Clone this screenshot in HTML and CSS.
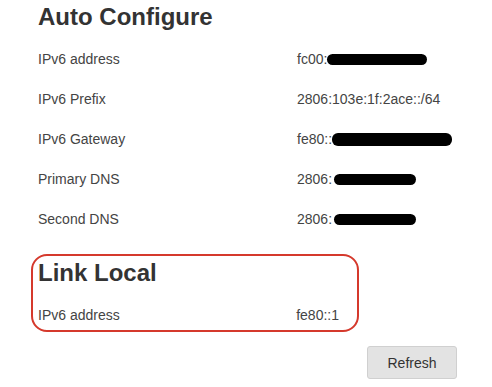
FILE: index.html
```html
<!DOCTYPE html>
<html lang="en">
<head>
    <meta charset="UTF-8">
    <meta name="viewport" content="width=device-width, initial-scale=1.0">
    <title>IPv6 Status</title>
    <link rel="stylesheet" href="styles.css">
</head>
<body>
    <div id="page">
        <h2 class="section-title">Auto Configure</h2>
        <div class="info-table">
            <div class="info-row">
                <span class="label">IPv6 address</span>
                <span class="value">fc00:<span class="redact" style="width: 100px"></span></span>
            </div>
            <div class="info-row">
                <span class="label">IPv6 Prefix</span>
                <span class="value">2806:103e:1f:2ace::/64</span>
            </div>
            <div class="info-row">
                <span class="label">IPv6 Gateway</span>
                <span class="value">fe80::<span class="redact tall" style="width: 120px"></span></span>
            </div>
            <div class="info-row">
                <span class="label">Primary DNS</span>
                <span class="value">2806:<span class="redact gap" style="width: 82px"></span></span>
            </div>
            <div class="info-row">
                <span class="label">Second DNS</span>
                <span class="value">2806:<span class="redact gap" style="width: 82px"></span></span>
            </div>
        </div>

        <div id="link-local">
            <h2 class="section-title">Link Local</h2>
            <div class="local-row">
                <span class="label">IPv6 address</span>
                <span class="value">fe80::1</span>
            </div>
        </div>

        <div class="actions">
            <button id="refresh">Refresh</button>
        </div>
    </div>
</body>
</html>
```

FILE: styles.css
```css
body {
    margin: 0;
    font-family: "Liberation Sans", Arial, sans-serif;
    background-color: #fff;
    color: #444;
}

#page {
    width: 419px;
    padding: 3px 0 0 38px;
}

.section-title {
    margin: 0;
    font-size: 24px;
    line-height: 28px;
    font-weight: bold;
    color: #333;
}

.info-table {
    margin-top: 8px;
}

.info-row {
    display: flex;
    height: 40px;
    line-height: 40px;
    font-size: 14px;
}

.info-row .label {
    flex: 0 0 259px;
}

.info-row .value {
    white-space: nowrap;
}

.redact {
    display: inline-block;
    height: 11px;
    background-color: #000;
    border-radius: 6px;
    vertical-align: -1px;
}

.redact.tall {
    height: 13px;
    vertical-align: -2px;
}

.redact.gap {
    margin-left: 2px;
}

#link-local {
    box-sizing: border-box;
    width: 328px;
    margin: 15px 0 0 -7px;
    padding: 3px 18px 5px 5px;
    border: 2px solid #d5392c;
    border-radius: 16px;
}

.local-row {
    display: flex;
    justify-content: space-between;
    margin-top: 18px;
    font-size: 14px;
    line-height: 20px;
}

.actions {
    display: flex;
    justify-content: flex-end;
    margin-top: 14px;
}

#refresh {
    width: 90px;
    height: 33px;
    font-family: inherit;
    font-size: 14px;
    color: #333;
    background-color: #e3e3e3;
    border: 1px solid #d0d0d0;
    border-radius: 3px;
}
```
